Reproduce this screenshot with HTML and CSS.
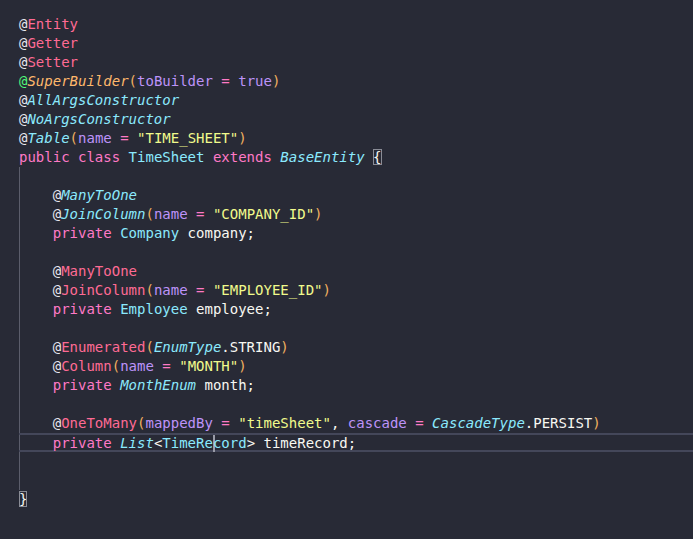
FILE: index.html
```html
<!DOCTYPE html>
<html>
<head>
<meta charset="utf-8">
<link rel="stylesheet" href="styles.css">
</head>
<body>
<div class="editor">
<div class="line"><span class="at">@</span><span class="an">Entity</span></div>
<div class="line"><span class="at">@</span><span class="an">Getter</span></div>
<div class="line"><span class="at">@</span><span class="an">Setter</span></div>
<div class="line"><span class="atg">@</span><span class="ao">SuperBuilder</span><span class="p">(</span><span class="pm">toBuilder</span> <span class="kw">=</span> <span class="pm">true</span><span class="p">)</span></div>
<div class="line"><span class="at">@</span><span class="ci">AllArgsConstructor</span></div>
<div class="line"><span class="at">@</span><span class="ci">NoArgsConstructor</span></div>
<div class="line"><span class="at">@</span><span class="ci">Table</span><span class="p">(</span><span class="pm">name</span> <span class="kw">=</span> <span class="st">"TIME_SHEET"</span><span class="p">)</span></div>
<div class="line"><span class="kw">public class</span> <span class="cl">TimeSheet</span> <span class="kw">extends</span> <span class="ci">BaseEntity</span> <span class="match">{</span></div>
<div class="body">
<div class="line"> </div>
<div class="line">    <span class="at">@</span><span class="ci">ManyToOne</span></div>
<div class="line">    <span class="at">@</span><span class="ci">JoinColumn</span><span class="p">(</span><span class="pm">name</span> <span class="kw">=</span> <span class="st">"COMPANY_ID"</span><span class="p">)</span></div>
<div class="line">    <span class="kw">private</span> <span class="cl">Company</span> company;</div>
<div class="line"> </div>
<div class="line">    <span class="at">@</span><span class="an">ManyToOne</span></div>
<div class="line">    <span class="at">@</span><span class="an">JoinColumn</span><span class="p">(</span><span class="pm">name</span> <span class="kw">=</span> <span class="st">"EMPLOYEE_ID"</span><span class="p">)</span></div>
<div class="line">    <span class="kw">private</span> <span class="cl">Employee</span> employee;</div>
<div class="line"> </div>
<div class="line">    <span class="at">@</span><span class="an">Enumerated</span><span class="p">(</span><span class="ci">EnumType</span>.STRING<span class="p">)</span></div>
<div class="line">    <span class="at">@</span><span class="an">Column</span><span class="p">(</span><span class="pm">name</span> <span class="kw">=</span> <span class="st">"MONTH"</span><span class="p">)</span></div>
<div class="line">    <span class="kw">private</span> <span class="ci">MonthEnum</span> month;</div>
<div class="line"> </div>
<div class="line">    <span class="at">@</span><span class="an">OneToMany</span><span class="p">(</span><span class="pm">mappedBy</span> <span class="kw">=</span> <span class="st">"timeSheet"</span>, <span class="pm">cascade</span> <span class="kw">=</span> <span class="ci">CascadeType</span>.PERSIST<span class="p">)</span></div>
<div class="line current">    <span class="kw">private</span> <span class="ci">List</span>&lt;<span class="cl">TimeRe</span><span class="caret"></span><span class="cl">cord</span>&gt; timeRecord;</div>
<div class="line"> </div>
<div class="line"> </div>
</div>
<div class="line"><span class="match">}</span></div>
</div>
</body>
</html>
```

FILE: styles.css
```css
html, body {
  margin: 0;
  padding: 0;
  background: #282a36;
  height: 100%;
}
.editor {
  padding: 14.5px 0 0 19px;
  font-family: "DejaVu Sans Mono", monospace;
  font-size: 14px;
  color: #f8f8f2;
}
.line {
  height: 19px;
  line-height: 19px;
  white-space: pre;
}
.body {
  border-left: 1px solid #5b5d6b;
}
.body .line {
  margin-left: -1px;
}
.current {
  box-sizing: border-box;
  border-top: 2px solid #44475a;
  border-bottom: 2px solid #44475a;
  line-height: 15px;
}
.at { color: #e8e8f0; }
.atg { color: #50fa7b; }
.an { color: #ff6a94; }
.ao { color: #ffb86c; font-style: italic; }
.ci { color: #8be9fd; font-style: italic; }
.cl { color: #8be9fd; }
.kw { color: #ff79c6; }
.pm { color: #bd93f9; }
.st { color: #f1fa8c; }
.p { color: #f0b060; }
.match {
  outline: 1px solid #8a8c96;
  outline-offset: -1px;
}
.caret {
  display: inline-block;
  width: 2px;
  height: 17px;
  margin-right: -2px;
  background: #9a9ca8;
  vertical-align: middle;
}
```
